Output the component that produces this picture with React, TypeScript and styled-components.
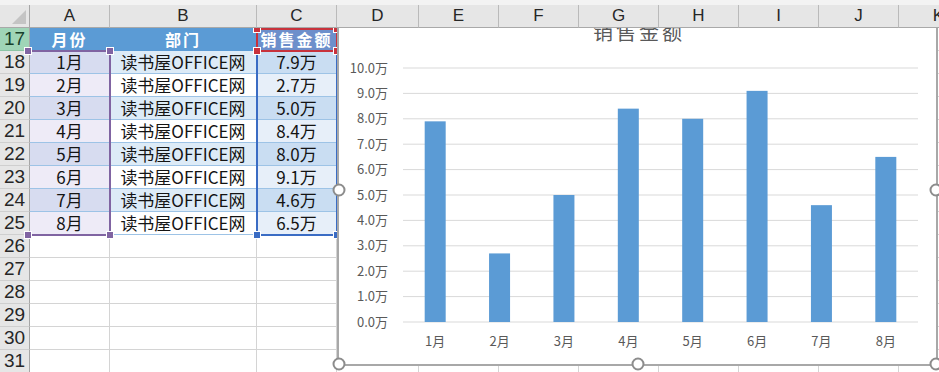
import { Fragment } from "react";
import styled, { createGlobalStyle } from "styled-components";

const GlobalStyle = createGlobalStyle`
	html, body {
		margin: 0;
		padding: 0;
		background: #ffffff;
		overflow: hidden;
	}
`;

const colWidths = [30, 80, 147, 80, 82, 80, 80, 80, 80, 80, 80, 80];
const COLS = colWidths.map((w) => `${w}px`).join(" ");
const colX = colWidths.reduce<number[]>((acc, w) => [...acc, acc[acc.length - 1] + w], [0]);
const letters = ["A", "B", "C", "D", "E", "F", "G", "H", "I", "J", "K"];
const rows = Array.from({ length: 15 }, (_, i) => 17 + i);
const ROW_H = 23;
const rowY = (r: number) => (r - 17) * ROW_H;

const sales = [7.9, 2.7, 5.0, 8.4, 8.0, 9.1, 4.6, 6.5];

const Sheet = styled.div`
	position: relative;
	width: 939px;
	height: 372px;
	overflow: hidden;
	background: #ffffff;
	font-family: "Noto Sans CJK SC", "Noto Sans", sans-serif;
`;

const TopStrip = styled.div`
	height: 5px;
	background: #f3f3f3;
`;

const HeaderRow = styled.div`
	display: grid;
	grid-template-columns: ${COLS};
	height: 23px;
`;

const ColHead = styled.div`
	box-sizing: border-box;
	background: #e6e6e6;
	border-right: 1px solid #bababa;
	border-bottom: 1px solid #a9a9a9;
	display: flex;
	align-items: center;
	justify-content: center;
	font: 17px "Liberation Sans", Arial, sans-serif;
	color: #262626;
`;

const Corner = styled(ColHead)`
	position: relative;
	border-right-color: #a6a6a6;

	&::after {
		content: "";
		position: absolute;
		right: 3px;
		bottom: 3px;
		width: 14px;
		height: 14px;
		background: #c4c4c4;
		clip-path: polygon(100% 0, 100% 100%, 0 100%);
	}
`;

const Body = styled.div`
	position: relative;
	display: grid;
	grid-template-columns: ${COLS};
	grid-auto-rows: ${ROW_H}px;
	overflow: hidden;
	height: 344px;
`;

const RowHead = styled.div<{ $active?: boolean }>`
	box-sizing: border-box;
	background: ${(p) => (p.$active ? "#9fd5b7" : "#e6e6e6")};
	border-right: 1px solid #a6a6a6;
	border-bottom: 1px solid ${(p) => (p.$active ? "#8cc5a5" : "#cfcfcf")};
	color: ${(p) => (p.$active ? "#17402b" : "#262626")};
	font: 19px/22px "Liberation Sans", Arial, sans-serif;
	text-align: center;
`;

const Cell = styled.div<{ $fill?: string; $line?: string; $head?: boolean }>`
	box-sizing: border-box;
	background: ${(p) => p.$fill ?? "#ffffff"};
	border-right: 1px solid ${(p) => p.$line ?? "#d4d4d4"};
	border-bottom: 1px solid ${(p) => p.$line ?? "#d4d4d4"};
	display: flex;
	align-items: center;
	justify-content: center;
	font-size: ${(p) => (p.$head ? "16px" : "17px")};
	line-height: 18px;
	color: ${(p) => (p.$head ? "#ffffff" : "#141414")};
	font-weight: ${(p) => (p.$head ? 700 : 400)};
	letter-spacing: ${(p) => (p.$head ? "2px" : "0")};
	white-space: nowrap;
`;

const Range = styled.div<{ $color: string; $open?: "left" | "top" }>`
	position: absolute;
	box-sizing: border-box;
	border: 2px solid ${(p) => p.$color};
	${(p) => (p.$open === "left" ? "border-left: none;" : "")}
	${(p) => (p.$open === "top" ? "border-top: none;" : "")}
	pointer-events: none;
`;

const Grip = styled.span<{ $color: string; $v: "top" | "bottom"; $h: "left" | "right" }>`
	position: absolute;
	${(p) => p.$v}: -4px;
	${(p) => p.$h}: -4px;
	width: 6px;
	height: 6px;
	box-sizing: border-box;
	background: ${(p) => p.$color};
	outline: 1px solid #ffffff;
`;

const Chart = styled.div`
	position: absolute;
	left: 337px;
	top: -14px;
	width: 601px;
	height: 352px;
	box-sizing: border-box;
	border: 2px solid #a8a8a8;
	background: #ffffff;
	display: flex;
	flex-direction: column;
`;

const ChartTitle = styled.div`
	height: 27px;
	padding-left: 3px;
	text-align: center;
	font-size: 20px;
	line-height: 20px;
	padding-top: 6px;
	box-sizing: border-box;
	letter-spacing: 3px;
	color: #595959;
`;

const Plot = styled.svg`
	display: block;
	flex: none;

	text {
		font-family: "Noto Sans CJK SC", "Noto Sans", sans-serif;
		font-size: 13px;
		fill: #595959;
	}
`;

const Handle = styled.span<{ $x: string; $y: string }>`
	position: absolute;
	left: ${(p) => p.$x};
	top: ${(p) => p.$y};
	width: 9px;
	height: 9px;
	border: 2px solid #8c8c8c;
	border-radius: 50%;
	background: #ffffff;
	transform: translate(-50%, -50%);
`;

const box = (c0: number, c1: number, r0: number, r1: number) => {
	const top = Math.max(0, rowY(r0) - 1);
	return {
		left: colX[c0] - 1,
		top,
		width: colX[c1 + 1] - colX[c0] + 2,
		height: rowY(r1 + 1) + 1 - top,
	};
};

function cellFor(r: number, c: number) {
	if (r === 17 && c < 3) {
		const fill = c === 2 ? "#6d8fcb" : "#5b9bd5";
		return { props: { $fill: fill, $line: fill, $head: true }, text: ["月份", "部门", "销售金额"][c] };
	}
	if (r >= 18 && r <= 25 && c < 3) {
		const i = r - 18;
		const odd = i % 2 === 0;
		const fills = odd ? ["#d7dcf0", "#ddebf7", "#c9ddf2"] : ["#eeebf7", "#ffffff", "#e7eff9"];
		const texts = [`${i + 1}月`, "读书屋OFFICE网", `${sales[i].toFixed(1)}万`];
		return { props: { $fill: fills[c], $line: "#9dc3e6" }, text: texts[c] };
	}
	return { props: {}, text: "" };
}

const PLOT_L = 403;
const PLOT_R = 918;
const BASE = 322;
const UNIT = 25.4;
const STEP = (PLOT_R - PLOT_L) / sales.length;

function SalesChart() {
	const ticks = Array.from({ length: 11 }, (_, i) => i);
	return (
		<Chart>
			<ChartTitle>销售金额</ChartTitle>
			<Plot width={597} height={321} viewBox="339 43 597 321">
				{ticks.map((v) => (
					<line key={v} x1={PLOT_L} x2={PLOT_R} y1={BASE - v * UNIT} y2={BASE - v * UNIT} stroke="#d9d9d9" strokeWidth={1} />
				))}
				{ticks.map((v) => (
					<text key={v} x={388} y={BASE - v * UNIT + 4.5} textAnchor="end">
						{v.toFixed(1)}万
					</text>
				))}
				{sales.map((s, i) => {
					const cx = PLOT_L + STEP * (i + 0.5);
					return (
						<Fragment key={i}>
							<rect x={cx - 10.5} y={BASE - s * UNIT} width={21} height={s * UNIT} fill="#5b9bd5" />
							<text x={cx} y={346} textAnchor="middle">
								{i + 1}月
							</text>
						</Fragment>
					);
				})}
			</Plot>
			<Handle $x="0%" $y="50%" />
			<Handle $x="100%" $y="50%" />
			<Handle $x="0%" $y="100%" />
			<Handle $x="50%" $y="100%" />
			<Handle $x="100%" $y="100%" />
		</Chart>
	);
}

function App() {
	return (
		<Sheet>
			<GlobalStyle />
			<TopStrip />
			<HeaderRow>
				<Corner />
				{letters.map((l) => (
					<ColHead key={l}>{l}</ColHead>
				))}
			</HeaderRow>
			<Body>
				{rows.map((r) => (
					<Fragment key={r}>
						<RowHead $active={r === 17}>{r}</RowHead>
						{letters.map((l, c) => {
							const cell = cellFor(r, c);
							return (
								<Cell key={l} {...cell.props}>
									{cell.text}
								</Cell>
							);
						})}
					</Fragment>
				))}
				<Range $color="#8064a2" $open="left" style={box(1, 1, 18, 25)}>
					<Grip $color="#8064a2" $v="top" $h="left" />
					<Grip $color="#8064a2" $v="top" $h="right" />
					<Grip $color="#8064a2" $v="bottom" $h="left" />
					<Grip $color="#8064a2" $v="bottom" $h="right" />
				</Range>
				<Range $color="#3a6cc4" $open="top" style={box(3, 3, 18, 25)}>
					<Grip $color="#3a6cc4" $v="bottom" $h="left" />
					<Grip $color="#3a6cc4" $v="bottom" $h="right" />
				</Range>
				<Range $color="#c8323c" style={box(3, 3, 17, 17)}>
					<Grip $color="#c8323c" $v="top" $h="left" />
					<Grip $color="#c8323c" $v="top" $h="right" />
					<Grip $color="#c8323c" $v="bottom" $h="left" />
					<Grip $color="#c8323c" $v="bottom" $h="right" />
				</Range>
				<SalesChart />
			</Body>
		</Sheet>
	);
}

export default App;
